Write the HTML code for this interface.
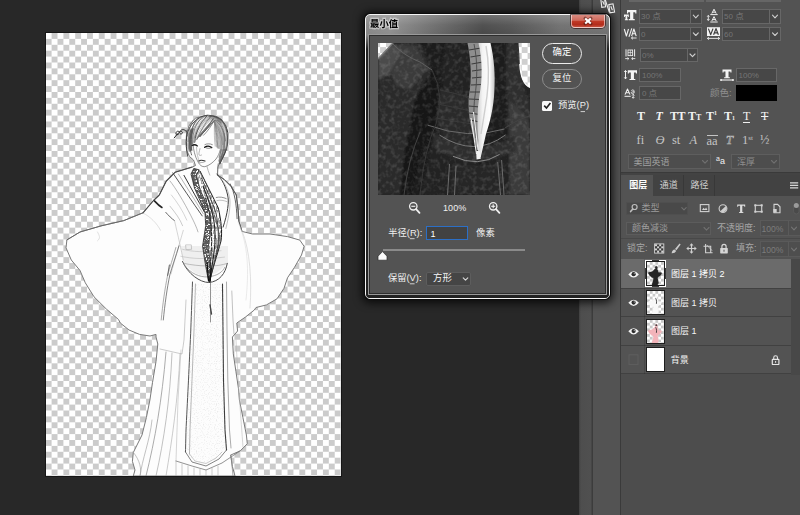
<!DOCTYPE html>
<html><head><meta charset="utf-8"><title>ps</title>
<style>
*{margin:0;padding:0;box-sizing:border-box}
html,body{width:800px;height:515px;overflow:hidden;background:#282828;font-family:"Liberation Sans",sans-serif;}
.a{position:absolute}
#canvas{left:45px;top:32px;width:297px;height:445px;border:1px solid #161616;background:repeating-conic-gradient(#cbcbcb 0 25%,#fff 0 50%) -0.3px 0/11.812px 11.812px}

.p{background:#535353}
.f{position:absolute;background:#474747;border:1px solid #676767}
.fd{position:absolute;top:0;bottom:0;width:1px;background:#676767}
.t{position:absolute;font-size:8px;line-height:10px;color:#757575;white-space:pre}
.ic{position:absolute;color:#f2f2f2;font-family:"Liberation Serif",serif;font-weight:bold;font-size:12px;line-height:12px;white-space:pre}
.ig{position:absolute;color:#c4c4c4;font-family:"Liberation Serif",serif;font-size:12.5px;line-height:12px;white-space:pre}
.row{position:absolute;left:621px;width:170px;height:29px;border-bottom:1px solid #414141}
.th{position:absolute;left:647px;width:17px;height:23px;background:repeating-conic-gradient(#c8c8c8 0 25%,#fff 0 50%) 0 0/5.6px 5.6px;outline:1px solid #1e1e1e}

#dlg{left:364px;top:13px;width:247px;height:287px;border-radius:6px;background:#0c0c0c;box-shadow:0 1px 9px 2px rgba(0,0,0,.75)}
#dlg:before{content:"";position:absolute;left:1px;top:1px;right:1px;bottom:1px;border-radius:5px;border:1px solid #f4f4f4;
 background:linear-gradient(180deg,rgba(255,255,255,.22) 0,rgba(255,255,255,.06) 10px,rgba(255,255,255,0) 21px),linear-gradient(90deg,#858585 0,#8d8d8d 10%,#6a6a6a 28%,#474747 48%,#505050 60%,#6c6c6c 80%,#707070 100%);}
#dlg:after{content:"";position:absolute;left:2px;top:22px;right:2px;bottom:2px;border-radius:0 0 4px 4px;background:linear-gradient(180deg,rgba(34,34,34,0) 0,#222 14px);}
#dlgc{left:368px;top:34px;width:239px;height:261px;background:#535353;border:1px solid #9a9a9a;box-shadow:inset 0 0 0 1px #2e2e2e}
#cls{left:571px;top:14.500px;width:34px;height:13.500px;border-radius:0 0 4px 4px;border:1px solid rgba(255,255,255,.55);border-top:0;background:linear-gradient(180deg,#d98a80 0,#cf6a5c 45%,#c23a27 50%,#b32d1c 80%,#c4503e 100%);box-shadow:0 0 0 1px rgba(40,10,10,.6)}
.tx{font-family:"Liberation Sans","Noto Sans CJK SC",sans-serif;white-space:pre}

</style></head><body>
<div class="a" id="canvas"></div>

<svg class="a" style="left:0;top:0" width="800" height="515" viewBox="0 0 800 515">
<defs><clipPath id="cv"><rect x="45" y="33" width="296" height="443"/></clipPath>
<clipPath id="bc"><polygon points="193.8,168.4 191.0,174.0 194.5,188.0 200.0,200.6 205.0,213.0 205.7,225.7 203.5,240.0 202.6,246.3 205.3,263.8 207.9,277.8 208.8,281.0 209.8,281.0 211.4,272.5 216.6,255.0 221.0,240.0 222.5,232.0 221.0,220.0 218.3,207.6 212.7,196.4 206.4,183.8 200.0,171.0"/></clipPath>
<pattern id="bp" width="3" height="2.2" patternUnits="userSpaceOnUse" patternTransform="rotate(22)"><rect width="3" height="2.2" fill="#222"/><rect x=".3" y=".4" width="1.100" height=".9" fill="#e8e8e8"/><rect x="1.900" y="1.300" width=".8" height=".7" fill="#bbb"/></pattern>
<filter id="stip" x="0" y="0" width="1" height="1"><feTurbulence type="fractalNoise" baseFrequency="0.85" numOctaves="2" seed="3" result="n"/><feColorMatrix in="n" type="matrix" values="0 0 0 0 0.66  0 0 0 0 0.66  0 0 0 0 0.66  0 0 0 1.5 -0.78" result="m"/><feComposite in="m" in2="SourceGraphic" operator="in"/></filter>
<filter id="brd" x="0" y="0" width="1" height="1"><feTurbulence type="turbulence" baseFrequency="0.55 0.4" numOctaves="2" seed="11" result="n"/><feColorMatrix in="n" type="matrix" values="0 0 0 0 0.1  0 0 0 0 0.1  0 0 0 0 0.1  0 0 0 9 -0.9" result="m"/><feComposite in="m" in2="SourceGraphic" operator="in"/></filter>
<filter id="brd2" x="0" y="0" width="1" height="1"><feTurbulence type="turbulence" baseFrequency="0.5 0.2" numOctaves="2" seed="4" result="n"/><feColorMatrix in="n" type="matrix" values="0 0 0 0 0.1  0 0 0 0 0.1  0 0 0 0 0.1  0 0 0 7 -1.1" result="m"/><feComposite in="m" in2="SourceGraphic" operator="in"/></filter>
<filter id="fb"><feGaussianBlur stdDeviation=".35"/></filter>
</defs>
<g clip-path="url(#cv)">
<polygon points="200.0,116.8 208.3,115.2 216.0,116.3 221.5,119.5 225.8,125.5 228.0,133.3 227.8,143.0 225.5,151.0 223.1,156.3 220.0,161.4 218.0,167.0 217.4,175.1 224.0,179.3 231.0,186.3 236.3,195.0 238.0,209.0 238.9,221.3 242.0,231.4 252.5,234.0 270.0,234.0 287.5,236.6 299.8,240.1 304.1,246.3 301.5,255.0 294.5,267.3 287.5,277.8 284.0,288.3 277.0,298.8 266.5,304.9 256.0,307.5 254.3,310.0 245.5,317.0 236.8,323.0 237.6,331.0 232.4,337.0 233.3,353.8 235.9,371.3 238.5,388.8 239.4,400.0 242.9,417.5 246.4,435.0 247.3,443.8 240.3,450.8 230.6,455.1 232.4,466.5 235.0,476.0 133.3,476.0 135.0,470.0 132.4,461.3 133.3,452.5 142.0,435.0 146.4,417.5 149.9,400.0 152.5,382.5 156.0,361.5 157.8,344.0 156.0,337.0 156.0,334.4 150.0,336.0 139.5,334.4 129.0,330.0 120.3,323.0 118.5,319.5 106.3,309.0 94.0,296.8 85.3,282.8 80.0,270.5 71.3,260.0 66.0,247.8 66.9,239.9 80.0,232.0 101.0,225.9 123.8,220.6 143.0,212.8 153.5,200.5 159.3,195.0 166.3,181.0 175.0,172.3 191.6,167.4 195.5,165.5 193.5,160.0 189.5,156.5 186.6,150.0 186.0,143.0 186.5,134.0 188.8,126.2 192.0,121.5 195.5,118.3" fill="#fdfdfd" stroke="#7a7a7a" stroke-width="1" stroke-linejoin="round"/>
<polygon points="194,284 223,284 225,430 226.500,450 219,459 206,465 193,461 186.500,452 189,380" fill="#9a9a9a" filter="url(#stip)"/>
<path d="M180 246 L228 246 L228 262 Q206 290 183 262Z" fill="#efefef" filter="url(#fb)"/>
<g fill="none" stroke-linecap="round" stroke-linejoin="round" filter="url(#fb)">
<path d="M 207.0 115.3 C 197.2 116.4 188.8 124.8 186.7 136.0 C 186.0 143.0 186.3 150.0 187.7 156.3" stroke="#333" stroke-width="0.9" /><path d="M 198.6 117.8 C 192.3 124.1 189.5 134.6 189.9 146.5 C 190.2 150.0 190.9 152.8 191.6 154.9" stroke="#444" stroke-width="0.8" /><path d="M 202.8 116.7 C 195.1 123.4 192.7 132.5 192.4 143.7" stroke="#555" stroke-width="0.7" /><path d="M 207.0 116.1 C 200.0 122.7 196.0 131.1 194.7 142.3" stroke="#333" stroke-width="0.9" /><path d="M 210.5 116.7 C 204.9 123.4 200.7 130.4 196.9 139.5" stroke="#555" stroke-width="0.7" /><path d="M 213.3 118.5 C 209.1 124.8 204.9 131.1 200.0 136.7" stroke="#333" stroke-width="0.9" /><path d="M 214.2 120.6 C 211.2 126.2 207.7 131.1 203.5 135.3" stroke="#666" stroke-width="0.7" /><path d="M 214.2 120.3 C 220.2 122.7 224.4 130.4 225.4 140.9" stroke="#444" stroke-width="0.8" /><path d="M 213.3 121.7 C 218.1 126.9 221.2 134.6 222.6 144.6" stroke="#666" stroke-width="0.7" /><path d="M 209.8 115.8 C 218.1 115.7 225.8 122.0 227.5 131.8" stroke="#333" stroke-width="0.9" /><path d="M 220.9 119.2 C 226.8 126.2 229.1 136.7 226.5 148.6 C 225.1 154.2 221.2 159.5 219.8 163.9" stroke="#333" stroke-width="0.9" /><path d="M 224.0 133.2 C 225.4 141.6 224.0 150.0 221.2 157.0" stroke="#555" stroke-width="0.7" /><path d="M 221.2 136.0 C 222.6 144.4 221.2 151.6 219.0 157.2" stroke="#777" stroke-width="0.7" /><path d="M 217.0 124.8 C 220.9 130.4 223.5 138.1 223.7 147.2" stroke="#777" stroke-width="0.6" /><path d="M 215.3 117.8 C 220.9 119.2 225.1 124.1 226.5 129.0" stroke="#666" stroke-width="0.7" /><path d="M 193.0 120.6 C 189.5 126.2 188.1 133.2 188.1 141.6" stroke="#666" stroke-width="0.7" /><path d="M 196.5 119.2 C 192.3 125.5 190.9 132.5 191.3 140.9" stroke="#777" stroke-width="0.6" /><path d="M 204.9 118.5 C 199.3 124.1 196.0 130.4 194.1 138.1" stroke="#777" stroke-width="0.6" /><path d="M 211.9 121.3 C 207.0 126.9 202.8 131.8 198.6 136.0" stroke="#666" stroke-width="0.9" /><path d="M 211.2 123.4 C 207.0 128.3 202.8 132.9 197.9 137.1" stroke="#555" stroke-width="1.0" /><path d="M 190.2 130.4 C 188.8 136.0 188.5 143.0 189.1 150.0" stroke="#777" stroke-width="0.8" /><path d="M 192.3 129.0 C 190.9 136.0 190.7 143.0 191.6 150.0" stroke="#888" stroke-width="0.7" /><path d="M 207.1 115.1 C 195.9 118.3 188.2 129.0 187.1 149.4" stroke="#666" stroke-width="0.4257841701067515" /><path d="M 207.8 115.7 C 197.0 118.9 189.9 129.8 188.9 148.3" stroke="#666" stroke-width="0.5731308845852496" /><path d="M 208.5 117.0 C 197.9 120.4 191.2 129.1 189.5 146.9" stroke="#888" stroke-width="0.43091671373307744" /><path d="M 209.2 116.5 C 199.3 121.0 193.0 129.8 191.0 145.9" stroke="#999" stroke-width="0.5396805597519022" /><path d="M 210.3 117.2 C 200.7 121.0 194.8 129.4 191.9 144.6" stroke="#999" stroke-width="0.6188335868317653" /><path d="M 210.2 118.3 C 201.8 121.8 196.5 129.7 193.1 143.0" stroke="#666" stroke-width="0.6293712598638439" /><path d="M 211.2 118.6 C 203.3 122.8 197.9 130.4 194.2 142.7" stroke="#999" stroke-width="0.5422295012258933" /><path d="M 211.9 118.2 C 205.1 123.4 199.8 130.8 195.2 141.0" stroke="#999" stroke-width="0.4067688784166766" /><path d="M 212.3 118.8 C 205.8 123.4 201.2 130.2 196.2 139.9" stroke="#777" stroke-width="0.4241743903600416" /><path d="M 213.0 119.6 C 207.9 124.9 202.9 130.5 197.4 138.6" stroke="#777" stroke-width="0.6873193611891973" /><path d="M 213.3 119.7 C 208.5 124.9 204.0 131.1 198.4 137.1" stroke="#777" stroke-width="0.5603772886900311" /><path d="M 214.7 120.3 C 217.4 128.0 220.7 136.3 221.1 150.0" stroke="#aaa" stroke-width="0.5177136720673806" /><path d="M 214.8 120.0 C 218.7 126.9 220.4 135.8 220.8 149.8" stroke="#666" stroke-width="0.43071387931756666" /><path d="M 215.5 120.3 C 219.7 127.4 220.9 135.8 221.5 150.1" stroke="#999" stroke-width="0.5806837566886025" /><path d="M 215.9 119.7 C 219.8 127.7 222.1 136.1 221.6 150.2" stroke="#999" stroke-width="0.5435865830529973" /><path d="M 216.6 120.0 C 220.2 127.6 222.6 136.7 222.9 150.2" stroke="#999" stroke-width="0.6935503728156918" /><path d="M 217.3 120.2 C 221.1 126.9 223.0 136.8 222.8 150.2" stroke="#999" stroke-width="0.5909325776019133" /><path d="M 217.4 120.2 C 222.3 126.6 223.9 136.5 223.5 149.7" stroke="#777" stroke-width="0.5066687630064874" /><path d="M 217.3 119.2 C 222.5 126.6 225.0 137.2 223.5 150.4" stroke="#999" stroke-width="0.6865001893963999" /><path d="M 218.1 119.2 C 223.0 126.5 225.1 137.0 224.3 150.4" stroke="#777" stroke-width="0.6727597593955204" /><path d="M 218.6 119.6 C 224.4 126.2 226.0 137.1 223.9 150.4" stroke="#777" stroke-width="0.6367406293060829" /><path d="M 219.1 119.6 C 225.3 126.5 226.7 137.5 224.9 149.5" stroke="#888" stroke-width="0.40826465521264976" /><path d="M 219.8 119.2 C 225.7 126.6 227.5 137.1 225.6 149.5" stroke="#aaa" stroke-width="0.43929515560283516" /><path d="M 219.7 119.6 C 226.4 126.3 228.5 137.1 225.8 150.4" stroke="#888" stroke-width="0.408398117687929" /><path d="M 220.4 118.9 C 227.2 126.0 228.8 137.7 225.3 150.2" stroke="#777" stroke-width="0.5987424490973698" /><path d="M 214.5 120.9 C 214.5 127.9 213.8 135.7 215.2 146.2" stroke="#999" stroke-width="0.5825663916854541" /><path d="M 214.7 120.4 C 214.5 127.7 214.8 135.6 216.3 146.5" stroke="#aaa" stroke-width="0.6352817426096427" /><path d="M 214.1 120.9 C 215.1 127.4 216.2 136.0 217.0 147.3" stroke="#777" stroke-width="0.5329745180732317" /><path d="M 214.7 120.7 C 215.9 127.7 216.9 136.0 217.9 148.1" stroke="#666" stroke-width="0.662960644534178" /><path d="M 214.9 120.4 C 216.5 128.0 218.1 135.7 218.4 148.3" stroke="#777" stroke-width="0.6013466341211767" /><path d="M 214.7 120.4 C 216.9 127.3 219.0 136.4 219.7 148.8" stroke="#888" stroke-width="0.6648498500971226" /><path d="M 215.2 120.3 C 218.0 127.4 219.7 136.4 220.8 149.4" stroke="#aaa" stroke-width="0.6982217837473863" /><path d="M 207.5 115.7 C 212.8 115.0 218.1 116.4 221.5 119.9" stroke="#555" stroke-width="0.6325991556567963" /><path d="M 208.8 116.7 C 213.4 116.4 218.4 117.7 221.2 120.3" stroke="#444" stroke-width="0.8623594754308386" /><path d="M 209.8 117.8 C 214.5 117.4 218.6 118.5 221.4 121.1" stroke="#777" stroke-width="0.7282379701573015" /><path d="M 211.3 118.3 C 214.8 118.2 218.6 118.9 221.5 121.8" stroke="#888" stroke-width="0.5334970104938073" /><path d="M 212.6 119.2 C 215.9 119.0 218.6 120.0 221.4 122.3" stroke="#666" stroke-width="0.5172822759357543" /><path d="M 213.8 120.6 C 216.6 120.0 218.6 121.1 221.1 123.1" stroke="#666" stroke-width="0.6159843338897433" /><path d="M 221.1 149.7 C 220.5 153.7 219.5 156.7 219.0 160.7" stroke="#666" stroke-width="0.7056939645849485" /><path d="M 221.5 149.8 C 221.4 154.3 220.2 157.4 219.3 161.4" stroke="#888" stroke-width="0.7750966942762766" /><path d="M 222.8 149.5 C 222.2 154.3 220.5 157.5 219.0 161.1" stroke="#666" stroke-width="0.5057020517311179" /><path d="M 223.2 150.0 C 222.3 153.7 220.9 157.8 219.3 162.3" stroke="#777" stroke-width="0.5968851735969947" /><path d="M 223.6 149.5 C 222.8 154.2 220.9 158.5 219.7 162.3" stroke="#666" stroke-width="0.5137786894013487" /><path d="M 224.9 149.3 C 223.3 154.0 221.1 158.2 219.5 162.4" stroke="#444" stroke-width="0.5363406785254737" /><path d="M 225.4 149.1 C 224.3 154.0 221.6 158.8 219.3 163.4" stroke="#666" stroke-width="0.7630174693250691" /><path d="M 226.1 149.7 C 224.7 154.0 222.6 158.6 220.0 163.5" stroke="#444" stroke-width="0.8299428547480391" /><path d="M 213.4 121.4 C 209.1 126.5 204.9 131.4 199.7 136.3" stroke="#555" stroke-width="0.747922736450594" /><path d="M 212.4 122.7 C 208.4 127.4 203.7 131.8 198.6 136.7" stroke="#555" stroke-width="0.6129854794647274" /><path d="M 211.6 123.2 C 207.1 128.3 202.8 132.9 197.9 137.1" stroke="#777" stroke-width="0.7693572741788621" /><path d="M 190.9 129.0 C 189.5 136.0 188.9 143.1 189.2 151.4" stroke="#555" stroke-width="0.7959314365682968" /><path d="M 192.0 129.0 C 189.9 136.0 189.5 143.1 190.2 151.1" stroke="#555" stroke-width="0.7398821090085062" /><path d="M 192.1 129.1 C 190.6 136.0 189.9 143.0 190.7 150.9" stroke="#555" stroke-width="0.7768740690281792" /><path d="M 193.0 128.8 C 191.0 136.0 190.6 142.7 191.6 150.2" stroke="#555" stroke-width="0.8745017363814866" /><path d="M 193.1 129.0 C 191.7 136.3 191.3 142.8 191.9 150.4" stroke="#555" stroke-width="0.5298451470776568" /><path d="M 193.0 144.1 C 193.5 150.0 194.7 155.6 197.9 161.8 C 199.7 165.3 202.1 167.0 204.9 166.7 C 209.1 165.6 213.3 162.3 216.0 159.0 C 218.1 156.3 219.5 152.8 220.2 150.0" stroke="#666" stroke-width="0.7" /><path d="M 204.7 147.3 C 206.7 145.9 209.5 145.9 211.7 147.6" stroke="#111" stroke-width="1.4" /><path d="M 205.8 147.7 C 207.7 148.6 209.8 148.6 211.2 147.7" stroke="#555" stroke-width="0.7" /><path d="M 192.1 145.5 C 193.7 144.4 195.5 144.5 197.4 145.9" stroke="#1a1a1a" stroke-width="1.3" /><path d="M 204.9 144.6 C 207.0 143.5 209.8 143.5 212.3 144.6" stroke="#666" stroke-width="0.7" /><path d="M 200.0 148.6 C 199.4 151.4 198.6 153.5 199.0 154.9 C 199.7 155.6 200.8 155.6 201.6 155.0" stroke="#888" stroke-width="0.6" /><path d="M 198.6 160.9 C 200.2 160.0 202.5 160.0 205.0 161.1" stroke="#333" stroke-width="1.1" /><path d="M 199.4 162.0 C 201.1 162.8 203.0 162.8 204.4 162.0" stroke="#888" stroke-width="0.6" /><path d="M 196.5 147.2 C 196.5 152.8 197.9 158.3 200.0 163.2" stroke="#999" stroke-width="0.6" /><path d="M 207.0 166.5 C 207.7 169.5 208.6 172.3 209.8 175.1" stroke="#888" stroke-width="0.6" /><path d="M 218.1 163.9 C 217.3 168.1 217.3 171.6 217.9 175.1" stroke="#777" stroke-width="0.7" /><path d="M 186.3 131.5 C 184.6 129.0 181.8 129.0 180.1 131.1 C 178.7 133.2 180.7 134.9 182.1 133.5 C 183.2 132.1 181.5 130.7 179.5 132.1 C 177.3 133.7 175.9 136.0 174.2 137.9 M 179.5 132.1 C 178.4 130.4 176.2 131.1 175.9 133.2 C 175.9 134.9 177.9 135.3 178.7 134.0" stroke="#2a2a2a" stroke-width="1.0" /><path d="M 186.3 130.4 L 187.4 136.0" stroke="#555" stroke-width="0.8" /><path d="M 184.0 175.4 C 191.0 188.0 198.0 200.6 204.3 211.7" stroke="#333" stroke-width="1.0" /><path d="M 172.8 172.9 C 181.2 185.2 192.4 202.0 202.2 215.9" stroke="#444" stroke-width="0.9" /><path d="M 178.4 174.0 C 185.4 185.2 195.2 200.6 203.3 213.8" stroke="#888" stroke-width="0.6" /><path d="M 170.0 181.0 C 175.6 188.0 184.0 202.0 191.0 215.9 C 193.8 221.5 196.6 227.1 198.0 231.9" stroke="#888" stroke-width="0.6" /><path d="M 216.9 174.0 C 222.4 179.6 225.7 186.6 227.6 195.0 C 229.4 202.0 227.6 213.1 223.1 227.1" stroke="#3a3a3a" stroke-width="1.0" /><path d="M 219.2 176.5 C 224.8 182.4 227.6 189.4 229.4 196.6 C 231.0 203.4 229.4 214.5 225.9 228.5" stroke="#999" stroke-width="0.6" /><path d="M 216.2 197.5 C 219.7 196.6 223.1 197.2 226.2 198.6" stroke="#666" stroke-width="0.7" /><path d="M 216.9 200.6 C 220.3 199.7 223.8 200.3 227.1 201.7" stroke="#999" stroke-width="0.6" /><path d="M 230.1 183.8 C 234.6 192.2 236.6 204.8 237.1 218.7" stroke="#555" stroke-width="0.9" /><path d="M 170.0 206.2 C 175.6 213.1 179.8 218.7 182.6 225.7" stroke="#aaa" stroke-width="0.6" /><path d="M 171.4 195.0 C 177.0 202.0 182.6 210.3 186.8 220.1" stroke="#bbb" stroke-width="0.6" /><path d="M 154.4 200.9 C 157.0 203.7 159.6 206.1 161.9 207.5" stroke="#222" stroke-width="1.6" /><path d="M 165.8 212.4 C 168.4 215.4 171.9 218.9 174.5 220.6" stroke="#555" stroke-width="0.9" /><path d="M 143.0 213.1 C 150.0 216.3 157.0 223.3 160.5 230.3" stroke="#ccc" stroke-width="0.6" /><path d="M 97.5 232.0 C 99.3 235.5 101.0 238.1 97.5 240.8" stroke="#ccc" stroke-width="0.6" /><path d="M 174.5 220.6 C 178.0 235.5 181.5 251.3 183.3 260.0" stroke="#bbb" stroke-width="0.6" /><path d="M 183.3 230.3 C 179.8 242.5 174.5 260.0 171.0 274.0" stroke="#bbb" stroke-width="0.6" /><path d="M192 167 L175 172.300 L166.300 181 L159.300 195 L153.500 200.500 L143 212.800" stroke="#4a4a4a" stroke-width="1.1" /><path d="M217.400 175 L224 179.300 L231 186.300 L236.300 195 L238 209 L238.900 221.300 L242 231.400" stroke="#555" stroke-width="1.0" /><path d="M143 212.800 L123.800 220.600 L101 225.900 L80 232 L66.900 239.900" stroke="#666" stroke-width="0.9" /><path d="M 182.5 261.5 C 187.8 273.8 200.0 282.5 208.8 282.5 C 219.3 281.6 225.4 273.8 227.3 263.3" stroke="#4a4a4a" stroke-width="1.0" /><path d="M 184.6 265.0 C 190.4 273.8 200.0 277.3 207.9 276.9 C 217.5 275.9 222.8 272.0 224.9 267.1" stroke="#888" stroke-width="0.7" /><path d="M 183.4 263.3 C 191.3 265.0 200.0 265.9 205.3 265.9" stroke="#999" stroke-width="0.6" /><path d="M 212.3 265.9 C 217.5 265.9 222.8 264.7 226.6 263.6" stroke="#999" stroke-width="0.6" /><path d="M 179.0 245.8 C 175.9 256.3 172.0 266.8 169.9 274.6 C 167.1 287.8 164.7 305.3 163.3 320.0" stroke="#666" stroke-width="0.8" /><path d="M 175.9 247.5 C 173.1 258.0 169.6 267.6 167.5 275.9 C 165.0 287.8 162.6 305.3 161.2 320.0" stroke="#888" stroke-width="0.7" /><path d="M 169.4 265.0 L 167.6 275.5" stroke="#666" stroke-width="1.0" /><path d="M 186.0 244.9 L 191.3 244.9 L 191.6 249.3 L 186.4 249.6 Z" stroke="#aaa" stroke-width="0.6" /><path d="M 182.5 249.3 C 193.0 251.9 203.5 252.4 221.0 250.7" stroke="#bbb" stroke-width="0.6" /><path d="M 180.8 256.3 C 193.0 258.9 205.3 259.4 224.5 257.1" stroke="#bbb" stroke-width="0.6" /><path d="M192.5 282 L190.8 330 L188.5 380 L186 430 L185.5 452" stroke="#555" stroke-width="1.0" stroke-dasharray="5 0.8"/><path d="M195.5 284 L194 330 L192 380 L190 430 L189.5 454" stroke="#999" stroke-width="0.7" /><path d="M222.5 284 L223 330 L223.5 380 L225 430 L226.5 450" stroke="#3c3c3c" stroke-width="1.1" stroke-dasharray="4 0.7"/><path d="M226.5 282 L227 330 L227.8 380 L229.5 430 L231 448" stroke="#888" stroke-width="0.7" /><path d="M210.5 281 L210.5 322" stroke="#666" stroke-width="0.7" /><path d="M210 305 L211.5 314" stroke="#444" stroke-width="1.4" /><path d="M185.5 452 L192 462 L206 466 L219 459 L226.5 450" stroke="#666" stroke-width="0.8" /><path d="M189.5 454 L195 461 L206 463.5 L216 458 L222 452" stroke="#aaa" stroke-width="0.6" /><path d="M176 461 L192 466 L206 470 L222 463 L240 451" stroke="#777" stroke-width="0.8" /><path d="M176 461 L176 476 M182 464 L182 476 M188 466 L188 476 M194 468 L194 476 M200 469 L200 476 M206 470 L206 476 M212 468 L212 476 M218 466 L218 476" stroke="#aaa" stroke-width="0.6" /><path d="M176 461 L178 400 L181 350" stroke="#bbb" stroke-width="0.6" /><path d="M160 349 L182 354 L184 340 L186 300" stroke="#aaa" stroke-width="0.6" /><path d="M166 352 C162 400 155 440 146 476" stroke="#888" stroke-width="0.7" /><path d="M172 353 C170 400 164 440 156 476" stroke="#999" stroke-width="0.6" /><path d="M180 354 C178 400 172 440 166 476" stroke="#aaa" stroke-width="0.6" /><path d="M152 420 C150 440 142 460 140 476" stroke="#999" stroke-width="0.6" /><path d="M133 452 C140 460 142 470 140 476" stroke="#999" stroke-width="0.6" /><path d="M231.800 291 L233 320 L234 334" stroke="#999" stroke-width="0.6" /><path d="M236 340 C238 380 241 420 243 447" stroke="#bbb" stroke-width="0.6" /><path d="M231 455 L233 476" stroke="#888" stroke-width="0.7" /><path d="M242 231 C250 250 252 280 250 308" stroke="#ccc" stroke-width="0.6" /><path d="M238 222 C246 240 250 262 246 300" stroke="#ddd" stroke-width="0.6" />
</g>
<g filter="url(#fb)">
<polygon points="193.8,168.4 191.0,174.0 194.5,188.0 200.0,200.6 205.0,213.0 205.7,225.7 203.5,240.0 202.6,246.3 205.3,263.8 207.9,277.8 208.8,281.0 209.8,282.5 209.5,279.3 210.8,265.3 208.1,247.8 209.0,241.5 211.2,227.2 210.5,214.5 205.5,202.1 200.0,189.5 196.5,175.5 199.3,169.9" fill="#fafafa"/><polygon points="193.8,168.4 191.0,174.0 194.5,188.0 200.0,200.6 205.0,213.0 205.7,225.7 203.5,240.0 202.6,246.3 205.3,263.8 207.9,277.8 208.8,281.0 209.8,282.5 209.5,279.3 210.8,265.3 208.1,247.8 209.0,241.5 211.2,227.2 210.5,214.5 205.5,202.1 200.0,189.5 196.5,175.5 199.3,169.9" fill="#000" filter="url(#brd)"/>
<polygon points="193.8,168.4 191.0,174.0 194.5,188.0 200.0,200.6 205.0,213.0 205.7,225.7 203.5,240.0 202.6,246.3 205.3,263.8 207.9,277.8 208.8,281.0 209.8,282.5 209.5,279.3 210.8,265.3 208.1,247.8 209.0,241.5 211.2,227.2 210.5,214.5 205.5,202.1 200.0,189.5 196.5,175.5 199.3,169.9" fill="none" stroke="#222" stroke-width=".8"/>
<polygon points="193.8,168.4 191.0,174.0 194.5,188.0 200.0,200.6 205.0,213.0 205.7,225.7 203.5,240.0 202.6,246.3 205.3,263.8 207.9,277.8 208.8,281.0 209.8,281.0 211.4,272.5 216.6,255.0 221.0,240.0 222.5,232.0 221.0,220.0 218.3,207.6 212.7,196.4 206.4,183.8 200.0,171.0" fill="#000" filter="url(#brd2)" opacity=".55"/>
<g fill="none" stroke="#1e1e1e" stroke-width="1">
<path d="M200 171 C206.400 184 213 197 218.300 208 C221 220 222.500 232 221 241 C217 256 212 270 209.800 281"/>
<path d="M201.500 178 C207 191 212.500 202 216 213 C218.500 226 219 238 217.500 248 C215 260 212 272 210 280" stroke="#333" stroke-width=".9"/>
<path d="M203 186 C207.500 197 211 207 213.500 218 C215.500 230 215.500 242 214 252 C213 262 211 272 209.500 280" stroke="#222" stroke-width="1.100"/>
<path d="M205.500 198 C208.500 208 210.500 218 211.300 228 C212 240 211.500 254 210 268" stroke="#2a2a2a" stroke-width="1" stroke-dasharray="4 1"/>
<path d="M210 203 C214 214 217.500 224 219.500 236 C219.500 244 218 250 216 256" stroke="#444" stroke-width=".8"/>
<path d="M207 262 L208.500 281 L210.300 281 L211 268" stroke="#111" stroke-width="1.200"/>
</g>
</g>
</g>
</svg>

<!-- strips -->
<div class="a" style="left:579px;top:0;width:14px;height:515px;background:linear-gradient(90deg,#404040 0,#4e4e4e 2px,#505050 12px,#3c3c3c 13px)"></div>
<div class="a" style="left:593px;top:0;width:27px;height:515px;background:#535353"></div>
<div class="a" style="left:620px;top:0;width:1px;height:515px;background:#3a3a3a"></div>
<!-- character panel -->
<div class="a p" style="left:621px;top:0;width:179px;height:172px"></div>
<div class="a" style="left:621px;top:172px;width:179px;height:3px;background:#434343;border-top:1px solid #3a3a3a"></div>
<div class="f" style="left:639px;top:9px;width:63px;height:15px"><div class="fd" style="left:49.500px"></div></div>
<div class="f" style="left:639px;top:27px;width:63px;height:14px"><div class="fd" style="left:49.500px"></div></div>
<div class="f" style="left:640px;top:48px;width:58px;height:14px"><div class="fd" style="left:46px"></div></div>
<div class="f" style="left:722px;top:9px;width:59px;height:15px"><div class="fd" style="left:45.500px"></div></div>
<div class="f" style="left:722px;top:27px;width:59px;height:14px"><div class="fd" style="left:46px"></div></div>
<div class="f" style="left:639px;top:68px;width:42px;height:14px"></div>
<div class="f" style="left:639px;top:86px;width:42px;height:14px"></div>
<div class="f" style="left:736px;top:68px;width:41px;height:14px"></div>
<div class="a" style="left:736px;top:85px;width:41px;height:16px;background:#000"></div>
<div class="f" style="left:628px;top:154px;width:83px;height:15px;border-color:#5e5e5e;background:#4d4d4d"></div>
<div class="f" style="left:731px;top:154px;width:49px;height:15px;border-color:#5e5e5e;background:#4d4d4d"></div>
<div class="t" style="left:641px;top:11.500px">30</div>
<div class="t" style="left:641px;top:29.500px">0</div>
<div class="t" style="left:642px;top:50.500px">0%</div>
<div class="t" style="left:724px;top:11.500px">50</div>
<div class="t" style="left:724px;top:29.500px">60</div>
<div class="t" style="left:642px;top:70.500px">100%</div>
<div class="t" style="left:642px;top:88.500px">0</div>
<div class="t" style="left:738.500px;top:70.500px">100%</div>
<div class="a" style="left:629px;top:0;width:75px;height:1.500px;background:#666"></div><div class="a" style="left:706px;top:0;width:75px;height:1.500px;background:#666"></div>
<!-- char icons -->
<svg class="a" style="left:0;top:0" width="800" height="110" viewBox="0 0 800 110"><polygon points="627.00,10.00 636.40,10.00 636.40,13.47 635.27,13.47 635.27,12.24 633.30,12.24 633.30,18.98 634.71,18.98 634.71,20.20 628.69,20.20 628.69,18.98 630.10,18.98 630.10,12.24 628.13,12.24 628.13,13.47 627.00,13.47" fill="#f4f4f4"/><polygon points="624.00,14.40 628.80,14.40 628.80,16.90 627.90,16.90 627.90,15.90 627.30,15.90 627.30,19.20 627.94,19.20 627.94,20.20 624.86,20.20 624.86,19.20 625.50,19.20 625.50,15.90 624.90,15.90 624.90,16.90 624.00,16.90" fill="#f4f4f4"/><g fill="none" stroke="#f0f0f0" stroke-width="1.100" stroke-linejoin="round"><path d="M624.300 29 l2.100 7 2.100-7"/><path d="M631.800 28.400 l-2.800 8.400"/><path d="M631.600 36.200 l2.300-7.200 2.300 7.200 M632.400 33.800h3"/></g><path d="M631.400 38h5.200M631.400 38l1.500-1.300M631.400 38l1.500 1.300" stroke="#f0f0f0" stroke-width=".9" fill="none"/><g fill="none" stroke="#f0f0f0" stroke-width="1" stroke-linejoin="round"><path d="M711.800 13.600 l2.200-4.400 2.200 4.400 M712.600 12.200h2.800"/><path d="M710.300 14.600h7.400"/><path d="M711.800 21 l2.200-4.400 2.200 4.400 M712.600 19.600h2.800"/><path d="M710.300 22h7.400"/><path d="M708.300 15.500v4.800 M707.200 16.700l1.100-1.300 1.100 1.300 M707.200 19.200l1.100 1.300 1.100-1.300" stroke-width=".9"/></g><rect x="707" y="27.200" width="13" height="8.800" fill="#f2f2f2"/><g fill="none" stroke="#3c3c3c" stroke-width="1.200" stroke-linejoin="round"><path d="M708.400 28.600 l2.300 6 2.300-6"/><path d="M713.600 34.800 l2.400-6.200 2.400 6.200 M714.400 32.800h3.200"/></g><path d="M707.400 38.400h12.200M707.400 38.400l1.500-1.300M707.400 38.400l1.500 1.300M719.600 38.400l-1.500-1.300M719.600 38.400l-1.500 1.300" stroke="#f0f0f0" stroke-width=".9" fill="none"/><g fill="none" stroke="#ededed" stroke-width="1"><path d="M626 49.300v7.200M634.600 49.300v7.200"/><rect x="628" y="50" width="4.600" height="5.600" stroke-width=".9"/><path d="M628 52.600h4.600M630.300 50v5.600" stroke-width=".7"/><path d="M625.200 58.600h3.600M628.800 58.600l-1.300-1.200M628.800 58.600l-1.300 1.200M635.300 58.600h-3.600M631.700 58.600l1.300-1.200M631.700 58.600l1.300 1.200" stroke-width=".9"/></g><path d="M625.500 70.600v8.200M624.300 72l1.200-1.500 1.200 1.500M624.300 77.400l1.200 1.500 1.200-1.500" stroke="#f0f0f0" stroke-width="1" fill="none"/><polygon points="627.80,70.20 637.00,70.20 637.00,73.57 635.90,73.57 635.90,72.38 633.96,72.38 633.96,78.91 635.34,78.91 635.34,80.10 629.46,80.10 629.46,78.91 630.84,78.91 630.84,72.38 628.90,72.38 628.90,73.57 627.80,73.57" fill="#f4f4f4"/><polygon points="722.50,69.60 731.50,69.60 731.50,72.52 730.42,72.52 730.42,71.49 728.53,71.49 728.53,77.17 729.88,77.17 729.88,78.20 724.12,78.20 724.12,77.17 725.47,77.17 725.47,71.49 723.58,71.49 723.58,72.52 722.50,72.52" fill="#f4f4f4"/><path d="M721 80h12" stroke="#f0f0f0" stroke-width="1.100"/><circle cx="721" cy="80" r="1" fill="#f0f0f0"/><circle cx="733" cy="80" r="1" fill="#f0f0f0"/><g fill="none" stroke="#f0f0f0" stroke-width="1.050" stroke-linejoin="round"><path d="M625 94.600 l2.500-5.600 2.500 5.600 M626 92.800h3"/><path d="M624.500 96.300h6.200"/><path d="M631.300 90.600c.8-1 2.800-.9 2.800.4v2.200 M634.100 91.800c-1.600 0-2.900.2-2.900 1 0 1 2.100 1 2.900-.2" stroke-width=".85"/><path d="M633.200 94.300v3.800M632 95.500l1.200-1.300 1.200 1.300M632 97l1.200 1.300 1.200-1.300" stroke-width=".85"/></g></svg>
<div class="ic" style="left:637px;top:110px">T</div>
<div class="ic" style="left:655.500px;top:110px;font-style:italic">T</div>
<div class="ic" style="left:670px;top:110px;letter-spacing:-.5px">TT</div>
<div class="ic" style="left:688px;top:110px">T<span style="font-size:8px">T</span></div>
<div class="ic" style="left:706px;top:110px">T<span style="font-size:6px;vertical-align:top;line-height:6px">1</span></div>
<div class="ic" style="left:724px;top:110px">T<span style="font-size:6px">1</span></div>
<div class="ic" style="left:743px;top:110px;font-weight:normal;border-bottom:1px solid #f0f0f0;height:12.500px">T</div>
<div class="ic" style="left:761px;top:110px;font-weight:normal;text-decoration:line-through">T</div>
<div class="ig" style="left:636.500px;top:133.500px">fi</div>
<div class="ig" style="left:655.500px;top:133.500px;font-style:italic">&#1012;</div>
<div class="ig" style="left:672px;top:133.500px">st</div>
<div class="ig" style="left:689.500px;top:133.500px;font-style:italic">A</div>
<div class="ig" style="left:706.500px;top:133.500px;border-top:1px solid #c4c4c4;line-height:11px;top:135px">aa</div>
<div class="ig" style="left:726px;top:133.500px;font-style:italic;color:transparent;-webkit-text-stroke:.6px #c4c4c4">T</div>
<div class="ig" style="left:742px;top:133.500px">1<span style="font-size:7px;vertical-align:top;line-height:8px">st</span></div>
<div class="ig" style="left:760px;top:133.500px">&#189;</div>
<div class="ic" style="left:716px;top:154.500px;font-family:'Liberation Sans',sans-serif;font-weight:normal;font-size:7px"><span style="vertical-align:top;line-height:8px">a</span><span style="font-size:9px">a</span></div>
<!-- layers panel -->
<div class="a" style="left:621px;top:175px;width:179px;height:21px;background:#424242"></div>
<div class="a p" style="left:621px;top:175px;width:32px;height:21px"></div>
<div class="a" style="left:683px;top:175px;width:1px;height:21px;background:#383838"></div>
<div class="a" style="left:714px;top:175px;width:1px;height:21px;background:#383838"></div>
<div class="a p" style="left:621px;top:196px;width:179px;height:63px"></div>
<div class="a" style="left:621px;top:238px;width:179px;height:1px;background:#484848"></div>
<div class="f" style="left:626px;top:202px;width:62px;height:13px;border-color:#4f4f4f;background:#494949"></div>
<div class="f" style="left:626px;top:222px;width:85px;height:13px;border-color:#5c5c5c;background:#4e4e4e"></div>
<div class="f" style="left:760px;top:220px;width:40px;height:16px;border-color:#5a5a5a;background:#4e4e4e;border-right:0"><div class="fd" style="left:27px;background:#5a5a5a"></div></div>
<div class="f" style="left:760px;top:241px;width:40px;height:16px;border-color:#5a5a5a;background:#4e4e4e;border-right:0"><div class="fd" style="left:27px;background:#5a5a5a"></div></div>
<div class="t" style="left:761.500px;top:223.500px;color:#7c7c7c;font-size:8.600px">100%</div>
<div class="t" style="left:761.500px;top:244.500px;color:#7c7c7c;font-size:8.600px">100%</div>
<!-- layer rows -->
<div class="a" style="left:621px;top:259px;width:179px;height:256px;background:#4d4d4d"></div>
<div class="a" style="left:791px;top:259px;width:9px;height:116px;background:#484848"></div>
<div class="row" style="top:259px;height:29.500px;background:#6b6b6b"></div>
<div class="row p" style="top:288.500px;height:28.500px"></div>
<div class="row p" style="top:317px;height:28.500px"></div>
<div class="row p" style="top:345.500px;height:28.500px"></div>
<div class="a" style="left:644px;top:259px;width:1px;height:115px;background:rgba(0,0,0,.12)"></div>
<div class="a" style="left:645px;top:260px;width:21px;height:27px;border:1px solid #fff;background:#222"></div>
<div class="a" style="left:652px;top:260px;width:7px;height:1px;background:#3a3a3a"></div><div class="a" style="left:652px;top:286px;width:7px;height:1px;background:#3a3a3a"></div><div class="a" style="left:645px;top:268px;width:1px;height:11px;background:#3a3a3a"></div><div class="a" style="left:665px;top:268px;width:1px;height:11px;background:#3a3a3a"></div>
<div class="th" style="top:262px"><svg style="position:absolute;left:0;top:0" width="17" height="23" viewBox="45.7 33 295.3 443" preserveAspectRatio="none"><polygon points="200.0,116.8 208.3,115.2 216.0,116.3 221.5,119.5 225.8,125.5 228.0,133.3 227.8,143.0 225.5,151.0 223.1,156.3 220.0,161.4 218.0,167.0 217.4,175.1 224.0,179.3 231.0,186.3 236.3,195.0 238.0,209.0 238.9,221.3 242.0,231.4 252.5,234.0 270.0,234.0 287.5,236.6 299.8,240.1 304.1,246.3 301.5,255.0 294.5,267.3 287.5,277.8 284.0,288.3 277.0,298.8 266.5,304.9 256.0,307.5 254.3,310.0 245.5,317.0 236.8,323.0 237.6,331.0 232.4,337.0 233.3,353.8 235.9,371.3 238.5,388.8 239.4,400.0 242.9,417.5 246.4,435.0 247.3,443.8 240.3,450.8 230.6,455.1 232.4,466.5 235.0,476.0 133.3,476.0 135.0,470.0 132.4,461.3 133.3,452.5 142.0,435.0 146.4,417.5 149.9,400.0 152.5,382.5 156.0,361.5 157.8,344.0 156.0,337.0 156.0,334.4 150.0,336.0 139.5,334.4 129.0,330.0 120.3,323.0 118.5,319.5 106.3,309.0 94.0,296.8 85.3,282.8 80.0,270.5 71.3,260.0 66.0,247.8 66.9,239.9 80.0,232.0 101.0,225.9 123.8,220.6 143.0,212.8 153.5,200.5 159.3,195.0 166.3,181.0 175.0,172.3 191.6,167.4 195.5,165.5 193.5,160.0 189.5,156.5 186.6,150.0 186.0,143.0 186.5,134.0 188.8,126.2 192.0,121.5 195.5,118.3" fill="#262626" stroke="#262626" stroke-width="5"/></svg></div>
<div class="th" style="top:291px"><svg style="position:absolute;left:0;top:0" width="17" height="23" viewBox="45.7 33 295.3 443" preserveAspectRatio="none"><polygon points="200.0,116.8 208.3,115.2 216.0,116.3 221.5,119.5 225.8,125.5 228.0,133.3 227.8,143.0 225.5,151.0 223.1,156.3 220.0,161.4 218.0,167.0 217.4,175.1 224.0,179.3 231.0,186.3 236.3,195.0 238.0,209.0 238.9,221.3 242.0,231.4 252.5,234.0 270.0,234.0 287.5,236.6 299.8,240.1 304.1,246.3 301.5,255.0 294.5,267.3 287.5,277.8 284.0,288.3 277.0,298.8 266.5,304.9 256.0,307.5 254.3,310.0 245.5,317.0 236.8,323.0 237.6,331.0 232.4,337.0 233.3,353.8 235.9,371.3 238.5,388.8 239.4,400.0 242.9,417.5 246.4,435.0 247.3,443.8 240.3,450.8 230.6,455.1 232.4,466.5 235.0,476.0 133.3,476.0 135.0,470.0 132.4,461.3 133.3,452.5 142.0,435.0 146.4,417.5 149.9,400.0 152.5,382.5 156.0,361.5 157.8,344.0 156.0,337.0 156.0,334.4 150.0,336.0 139.5,334.4 129.0,330.0 120.3,323.0 118.5,319.5 106.3,309.0 94.0,296.8 85.3,282.8 80.0,270.5 71.3,260.0 66.0,247.8 66.9,239.9 80.0,232.0 101.0,225.9 123.8,220.6 143.0,212.8 153.5,200.5 159.3,195.0 166.3,181.0 175.0,172.3 191.6,167.4 195.5,165.5 193.5,160.0 189.5,156.5 186.6,150.0 186.0,143.0 186.5,134.0 188.8,126.2 192.0,121.5 195.5,118.3" fill="#f8f8f8" stroke="#f8f8f8" stroke-width="5"/><path d="M196 172 L208 205 L212 240 L209 280" stroke="#222" stroke-width="14" fill="none"/></svg></div>
<div class="th" style="top:319.5px"><svg style="position:absolute;left:0;top:0" width="17" height="23" viewBox="45.7 33 295.3 443" preserveAspectRatio="none"><polygon points="200.0,116.8 208.3,115.2 216.0,116.3 221.5,119.5 225.8,125.5 228.0,133.3 227.8,143.0 225.5,151.0 223.1,156.3 220.0,161.4 218.0,167.0 217.4,175.1 224.0,179.3 231.0,186.3 236.3,195.0 238.0,209.0 238.9,221.3 242.0,231.4 252.5,234.0 270.0,234.0 287.5,236.6 299.8,240.1 304.1,246.3 301.5,255.0 294.5,267.3 287.5,277.8 284.0,288.3 277.0,298.8 266.5,304.9 256.0,307.5 254.3,310.0 245.5,317.0 236.8,323.0 237.6,331.0 232.4,337.0 233.3,353.8 235.9,371.3 238.5,388.8 239.4,400.0 242.9,417.5 246.4,435.0 247.3,443.8 240.3,450.8 230.6,455.1 232.4,466.5 235.0,476.0 133.3,476.0 135.0,470.0 132.4,461.3 133.3,452.5 142.0,435.0 146.4,417.5 149.9,400.0 152.5,382.5 156.0,361.5 157.8,344.0 156.0,337.0 156.0,334.4 150.0,336.0 139.5,334.4 129.0,330.0 120.3,323.0 118.5,319.5 106.3,309.0 94.0,296.8 85.3,282.8 80.0,270.5 71.3,260.0 66.0,247.8 66.9,239.9 80.0,232.0 101.0,225.9 123.8,220.6 143.0,212.8 153.5,200.5 159.3,195.0 166.3,181.0 175.0,172.3 191.6,167.4 195.5,165.5 193.5,160.0 189.5,156.5 186.6,150.0 186.0,143.0 186.5,134.0 188.8,126.2 192.0,121.5 195.5,118.3" fill="#f3b4ba" stroke="#f3b4ba" stroke-width="5"/><path d="M196 172 L208 205 L212 240 L209 280" stroke="#222" stroke-width="14" fill="none"/><path d="M190 125 Q208 108 226 128 L222 150 L192 145Z" fill="#333"/></svg></div>
<div class="th" style="top:348px;background:#fff"></div>
<!-- dialog -->
<div class="a" id="dlg"></div>
<div class="a" id="dlgc"></div>
<div class="a" id="cls"></div>

<svg class="a" style="left:378px;top:43px" width="152" height="152" viewBox="378 43 152 152">
<defs>
<pattern id="ck" width="11.800" height="11.800" patternUnits="userSpaceOnUse" x="374.200" y="41.200"><rect width="11.800" height="11.800" fill="#fff"/><rect x="0" y="0" width="5.900" height="5.900" fill="#cfcfcf"/><rect x="5.900" y="5.900" width="5.900" height="5.900" fill="#cfcfcf"/></pattern>
<linearGradient id="hg" x1="0" x2="1" y1="0" y2="0"><stop offset="0" stop-color="#d0d0d0"/><stop offset=".3" stop-color="#f4f4f4"/><stop offset=".7" stop-color="#fdfdfd"/><stop offset="1" stop-color="#c4c4c4"/></linearGradient>
<filter id="b1"><feGaussianBlur stdDeviation="1.2"/></filter>
<filter id="b2"><feGaussianBlur stdDeviation="0.500"/></filter>
<filter id="pn" x="0" y="0" width="1" height="1"><feTurbulence type="fractalNoise" baseFrequency="0.22" numOctaves="2" seed="5" result="n"/><feColorMatrix in="n" type="matrix" values="0 0 0 0 1  0 0 0 0 1  0 0 0 0 1  0 0 0 1.600 -0.72" result="m"/><feComposite in="m" in2="SourceGraphic" operator="in"/></filter>
</defs>
<rect x="378" y="43" width="152" height="152" fill="#1c1c1c"/>
<g filter="url(#b1)">
<path d="M378 60 L392 43 L420 43 L432 70 L415 100 L405 150 L400 195 L378 195Z" fill="#2a2a2a"/>
<path d="M386 60 L398 44 L416 46 L428 68 L410 90 L396 86Z" fill="#3a3a3a"/>
<path d="M378 56 L392 43 L402 50 L390 72 L378 80Z" fill="#4c4c4c"/>
<path d="M432 70 L446 95 L436 125 L418 160 L410 195 L400 195 L405 150 L415 100Z" fill="#151515"/>
<path d="M446 43 L468 43 L474 90 L470 130 L478 165 L520 150 L512 100 L516 43 L530 43 L530 195 L420 195 L430 150 L448 110 L440 70Z" fill="#212121"/>
<path d="M506 43 L522 43 L524 90 L530 100 L530 195 L508 195 L512 130 L506 90Z" fill="#2d2d2d"/>
<path d="M508 100 Q522 108 530 124 L530 195 L510 195Z" fill="#3b3b3b"/>
<path d="M440 88 L470 96 L472 150 L445 140 L436 120Z" fill="#2b2b2b"/>
<path d="M434 132 Q470 160 514 136 L516 150 Q472 176 432 146Z" fill="#2e2e2e"/>
<path d="M452 165 L500 165 L504 195 L450 195Z" fill="#252525"/>
</g>
<rect x="378" y="43" width="152" height="152" fill="#8a8a8a" filter="url(#pn)" opacity=".22"/>
<g fill="none" stroke="#6e6e6e" stroke-width="1" filter="url(#b2)">
<path d="M427.800 125.200 Q468.500 140 504.500 129" stroke="#6a6a6a"/>
<path d="M439.400 135 Q474.400 158 505.400 135" stroke="#777"/>
<path d="M453 156.300 Q478.300 168 499.600 154.400" stroke="#8a8a8a"/>
<path d="M449.500 164 L447.500 195 M456 166 L454.500 195 M497.700 162 L500.500 195 M501.600 160 L504 195" stroke="#6c6c6c"/>
<path d="M392 43 Q404 56 420 62 L432 70" stroke="#606060"/>
<path d="M440 90 L470 97 M438 104 L471 111 M436 118 L472 124" stroke="#3a3a3a"/>
<path d="M432 70 Q445 95 436 124 Q424 150 420 195" stroke="#383838"/>
<path d="M420 132 Q408 160 404 195" stroke="#444"/>
<path d="M505 128 Q520 118 530 116" stroke="#444"/>
</g>
<g filter="url(#b2)">
<path d="M467.500 43 L480 43 C485 60 484 80 481 95 C479 110 480 120 480 128 L477 150 L474.500 140 C470 125 467.500 110 469 95 C472 80 471 60 467.500 43Z" fill="#8e8e8e"/>
<path d="M469 50 L481 48 M470.500 57 L482.500 55 M471.500 64 L483 62 M472 71 L483 69.500 M472 78 L483 77 M471 85 L482 84.500 M470 92 L481 92 M469 99 L480 99.500 M468.500 106 L480 107 M469 113 L480 114.500 M470 120 L480 122" stroke="#3c3c3c" stroke-width="1.100" fill="none"/>
<path d="M474 44 C478 62 477 82 475 96 C473 110 474 124 476 138" stroke="#4a4a4a" stroke-width=".9" fill="none"/>
<path d="M478.500 43 L490.500 43 C494 58 495.500 75 494.300 92 C493.500 108 490 122 486 134 L480.800 157 L477.500 158.500 L478.200 140 C477 125 477 110 479.500 95 C482.500 80 482.500 60 478.500 43Z" fill="url(#hg)"/>
<path d="M486 46 C489 62 489 80 487 96 C485 110 483 122 481 134" stroke="#cfcfcf" stroke-width="1.400" fill="none"/>
<path d="M471 118 L476.500 154 M473.500 112 L478 150" stroke="#f0f0f0" stroke-width="1.100" fill="none"/>
<path d="M480.800 158.800 L476.500 159.500 L476.200 151 L479.800 151Z" fill="#f2f2f2"/>
</g>
<path d="M378 43 L393 43 L378 59Z" fill="url(#ck)"/>
<path d="M378 59 L393 43" stroke="#777" stroke-width="1.500" filter="url(#b2)"/>
<path d="M518.500 43 L530 43 L530 87.500 C524 85 520.500 77 519.800 64 C519.500 55 519 49 518.500 43Z" fill="url(#ck)"/>
<path d="M530 87.500 C524 85 520.500 77 519.800 64" stroke="#fff" stroke-width="1.200" fill="none" filter="url(#b2)"/>
</svg>
<div class="a" style="left:542px;top:43px;width:40px;height:20.500px;border:1.300px solid #ececec;border-radius:10.500px"></div>
<div class="a" style="left:542px;top:68.500px;width:40px;height:20.500px;border:1px solid #8b8b8b;border-radius:10.500px"></div>
<div class="a" style="left:542px;top:100.500px;width:10px;height:10px;background:#fafafa;border-radius:1.500px"></div>
<div class="a" style="left:426px;top:226px;width:42px;height:14px;background:#424242;border:1px solid #2c6fc6"></div>
<div class="a" style="left:430.500px;top:228.500px;font-size:9px;line-height:10px;color:#fff">1</div>
<div class="a" style="left:383px;top:248.500px;width:142px;height:2.200px;background:#8a8a8a"></div>
<div class="a" style="left:426px;top:271.500px;width:45px;height:14px;background:#454545;border:1px solid #5d5d5d;border-radius:2px"></div>
<div class="a" style="left:443px;top:202.500px;font-size:9px;line-height:10px;color:#f0f0f0;letter-spacing:.1px">100%</div>
<svg class="a" style="left:0;top:0" width="800" height="515" viewBox="0 0 800 515"><defs><filter id="glow" x="-20%" y="-50%" width="140%" height="200%"><feGaussianBlur stdDeviation="0"/></filter></defs><text class="tx" x="652.3" y="18.700" font-size="8.500" fill="#7b7b7b">点</text><text class="tx" x="735.3" y="18.700" font-size="8.500" fill="#7b7b7b">点</text><text class="tx" x="648.5" y="95.900" font-size="8.500" fill="#7b7b7b">点</text><text class="tx" x="709.9" y="95.600" font-size="9.500" fill="#8f8f8f">颜色:</text><text class="tx" x="633.4" y="164.700" font-size="9" fill="#a2a2a2">美国英语</text><text class="tx" x="736.9" y="164.700" font-size="9" fill="#8c8c8c">浑厚</text><path d="M693.3 15.2 L695.8 17.8 L698.3 15.2" fill="none" stroke="#cfcfcf" stroke-width="1.1" stroke-linecap="round" stroke-linejoin="round"/><path d="M693.3 32.9 L695.8 35.5 L698.3 32.9" fill="none" stroke="#cfcfcf" stroke-width="1.1" stroke-linecap="round" stroke-linejoin="round"/><path d="M690.0 54.0 L692.5 56.6 L695.0 54.0" fill="none" stroke="#cfcfcf" stroke-width="1.1" stroke-linecap="round" stroke-linejoin="round"/><path d="M772.5 15.2 L775.0 17.8 L777.5 15.2" fill="none" stroke="#cfcfcf" stroke-width="1.1" stroke-linecap="round" stroke-linejoin="round"/><path d="M772.5 32.9 L775.0 35.5 L777.5 32.9" fill="none" stroke="#cfcfcf" stroke-width="1.1" stroke-linecap="round" stroke-linejoin="round"/><path d="M702.5 160.5 L705.0 163.1 L707.5 160.5" fill="none" stroke="#6f6f6f" stroke-width="1.1" stroke-linecap="round" stroke-linejoin="round"/><path d="M771.5 160.5 L774.0 163.1 L776.5 160.5" fill="none" stroke="#6f6f6f" stroke-width="1.1" stroke-linecap="round" stroke-linejoin="round"/><text class="tx" x="629.2" y="188" font-size="9" font-weight="bold" fill="#ffffff">图层</text><text class="tx" x="659.8" y="187.800" font-size="9" fill="#d0d0d0">通道</text><text class="tx" x="690.5" y="187.800" font-size="9" fill="#d0d0d0">路径</text><text class="tx" x="641.6" y="211.200" font-size="9" fill="#9c9c9c">类型</text><path d="M681.8 207.7 L684.0 209.9 L686.2 207.7" fill="none" stroke="#6f6f6f" stroke-width="1.1" stroke-linecap="round" stroke-linejoin="round"/><text class="tx" x="632" y="231.400" font-size="9" fill="#a0a0a0">颜色减淡</text><path d="M704.0 227.5 L706.5 230.1 L709.0 227.5" fill="none" stroke="#6f6f6f" stroke-width="1.1" stroke-linecap="round" stroke-linejoin="round"/><text class="tx" x="717.1" y="231" font-size="9" fill="#a6a6a6">不透明度:</text><text class="tx" x="627" y="251.200" font-size="9" fill="#a6a6a6">锁定:</text><text class="tx" x="736" y="251.200" font-size="9" fill="#a6a6a6">填充:</text><path d="M791.5 227.2 L794.0 229.8 L796.5 227.2" fill="none" stroke="#747474" stroke-width="1.1" stroke-linecap="round" stroke-linejoin="round"/><path d="M791.5 248.2 L794.0 250.8 L796.5 248.2" fill="none" stroke="#747474" stroke-width="1.1" stroke-linecap="round" stroke-linejoin="round"/><text class="tx" x="671" y="277.160" font-size="9" fill="#fff">图层 1 拷贝 2</text><text class="tx" x="671" y="305.660" font-size="9" fill="#f4f4f4">图层 1 拷贝</text><text class="tx" x="671" y="334.060" font-size="9" fill="#f4f4f4">图层 1</text><text class="tx" x="670.8" y="362.700" font-size="9" fill="#f4f4f4">背景</text><path d="M628.3000000000001 274.4 Q633.6 268.2 638.9 274.4 Q633.6 280.59999999999997 628.3000000000001 274.4Z" fill="#f4f4f4"/><circle cx="633.6" cy="274.2" r="2.1" fill="#2b2b2b"/><circle cx="634.3000000000001" cy="273.59999999999997" r="0.7" fill="#9a9a9a"/><path d="M628.3000000000001 302.8 Q633.6 296.6 638.9 302.8 Q633.6 309.0 628.3000000000001 302.8Z" fill="#f4f4f4"/><circle cx="633.6" cy="302.6" r="2.1" fill="#2b2b2b"/><circle cx="634.3000000000001" cy="302.0" r="0.7" fill="#9a9a9a"/><path d="M628.3000000000001 331.3 Q633.6 325.1 638.9 331.3 Q633.6 337.5 628.3000000000001 331.3Z" fill="#f4f4f4"/><circle cx="633.6" cy="331.1" r="2.1" fill="#2b2b2b"/><circle cx="634.3000000000001" cy="330.5" r="0.7" fill="#9a9a9a"/><rect x="629" y="354.8" width="9" height="9.6" fill="none" stroke="#5f5f5f" stroke-width="1"/><rect x="772.3" y="359.3" width="6.6" height="5.2" rx="0.6" fill="none" stroke="#e6e6e6" stroke-width="1.2"/><path d="M773.7 359.3 v-1.6 a1.9 1.9 0 0 1 3.8 0 v1.6" fill="none" stroke="#e6e6e6" stroke-width="1.1"/><rect x="775.1" y="361" width="1" height="1.8" fill="#e6e6e6"/><path d="M790 182.8h8.2M790 185.3h8.2M790 187.8h8.2" stroke="#d8d8d8" stroke-width="1.2"/><circle cx="634.6" cy="207" r="2.5" fill="none" stroke="#bdbdbd" stroke-width="1.2"/><path d="M632.8 209 L630.6 211.6" stroke="#bdbdbd" stroke-width="1.6" stroke-linecap="round"/><rect x="700.3" y="204.6" width="8.6" height="7" fill="none" stroke="#d2d2d2" stroke-width="1.1"/><path d="M702 210 l1.6-2.2 1.3 1.4 1.2-1.7 1.3 2.5z" fill="#d2d2d2"/><circle cx="723" cy="208.6" r="3.9" fill="none" stroke="#cfcfcf" stroke-width="1.1"/><path d="M720.3 211.3 A3.9 3.9 0 0 0 725.8 205.9 Z" fill="#cfcfcf"/><path d="M737.2 204.6h8v2.2h-.8l-.4-1.1h-1.7v6.2l1.1.3v.7h-4.4v-.7l1.1-.3v-6.2h-1.7l-.4 1.100h-.8z" fill="#dcdcdc"/><rect x="755.3" y="205.3" width="6.4" height="6.4" fill="none" stroke="#d2d2d2" stroke-width="1.1"/><rect x="754.3" y="204.3" width="2" height="2" fill="#d2d2d2"/><rect x="754.3" y="210.7" width="2" height="2" fill="#d2d2d2"/><rect x="760.7" y="204.3" width="2" height="2" fill="#d2d2d2"/><rect x="760.7" y="210.7" width="2" height="2" fill="#d2d2d2"/><path d="M774 204.4h3.6l2.400 2.400v6h-6z" fill="none" stroke="#d2d2d2" stroke-width="1.1"/><rect x="773.3" y="209" width="3.4" height="3.6" fill="#d2d2d2"/><rect x="793.6" y="203.5" width="5.4" height="10.5" rx="2.7" fill="#4a4a4a" stroke="#5e5e5e" stroke-width=".8"/><circle cx="796.3" cy="205.6" r="2.5" fill="#9b9b9b"/><rect x="655.0" y="244.3" width="2.1" height="2.1" fill="#d4d4d4"/><rect x="655.0" y="246.4" width="2.1" height="2.1" fill="#3a3a3a"/><rect x="655.0" y="248.5" width="2.1" height="2.1" fill="#d4d4d4"/><rect x="655.0" y="250.6" width="2.1" height="2.1" fill="#3a3a3a"/><rect x="657.1" y="244.3" width="2.1" height="2.1" fill="#3a3a3a"/><rect x="657.1" y="246.4" width="2.1" height="2.1" fill="#d4d4d4"/><rect x="657.1" y="248.5" width="2.1" height="2.1" fill="#3a3a3a"/><rect x="657.1" y="250.6" width="2.1" height="2.1" fill="#d4d4d4"/><rect x="659.2" y="244.3" width="2.1" height="2.1" fill="#d4d4d4"/><rect x="659.2" y="246.4" width="2.1" height="2.1" fill="#3a3a3a"/><rect x="659.2" y="248.5" width="2.1" height="2.1" fill="#d4d4d4"/><rect x="659.2" y="250.6" width="2.1" height="2.1" fill="#3a3a3a"/><rect x="661.3" y="244.3" width="2.1" height="2.1" fill="#3a3a3a"/><rect x="661.3" y="246.4" width="2.1" height="2.1" fill="#d4d4d4"/><rect x="661.3" y="248.5" width="2.1" height="2.1" fill="#3a3a3a"/><rect x="661.3" y="250.6" width="2.1" height="2.1" fill="#d4d4d4"/><rect x="654.6" y="243.900" width="9.2" height="9.2" fill="none" stroke="#d4d4d4" stroke-width=".9"/><path d="M679.6 243.6 L675 249 L676.4 250.2 L680.6 244.6Z" fill="#cdcdcd"/><path d="M674.6 249.600 q-2.200 .2 -3 3.600 q3.400 .2 4.600-2.300z" fill="#cdcdcd"/><path d="M691.500 243.300l2 2.300h-1.400v2.300h2.300v-1.400l2.300 2-2.300 2v-1.400h-2.300v2.300h1.400l-2 2.300-2-2.300h1.400v-2.300h-2.300v1.400l-2.300-2 2.300-2v1.400h2.300v-2.300h-1.400z" fill="#d0d0d0"/><path d="M703.500 246.200h7.200v6.600M705.600 244v8.800h7" fill="none" stroke="#d0d0d0" stroke-width="1.1"/><path d="M707 245.200 L712 250.600" stroke="#d0d0d0" stroke-width=".9"/><rect x="720.2" y="248" width="7.6" height="5.400" rx=".6" fill="#d6d6d6"/><path d="M721.900 248v-1.500a2.100 2.100 0 0 1 4.200 0v1.500" fill="none" stroke="#d6d6d6" stroke-width="1.2"/><rect x="723.5" y="249.700" width="1" height="2" fill="#555"/><text class="tx" x="370.1" y="26.900" font-size="9.300" font-weight="bold" fill="#000" stroke="#f4f4f4" stroke-width="2.400" stroke-opacity=".5" paint-order="stroke" filter="url(#glow)">最小值</text><text class="tx" x="552.5" y="55.200" font-size="9.400" fill="#fff">确定</text><text class="tx" x="552.5" y="81.100" font-size="9.400" fill="#f0f0f0">复位</text><text class="tx" x="558" y="108.340" font-size="9.300" fill="#f0f0f0">预览(P)</text><path d="M580.600 111.600h4.400" stroke="#f0f0f0" stroke-width=".8"/><text class="tx" x="388.2" y="235.640" font-size="9.300" fill="#f0f0f0">半径(R):</text><path d="M409.800 238.700h4.800" stroke="#f0f0f0" stroke-width=".8"/><text class="tx" x="476" y="235.600" font-size="9.400" fill="#f0f0f0">像素</text><text class="tx" x="387.9" y="280.740" font-size="9.300" fill="#f0f0f0">保留(V):</text><path d="M409.800 283.800h4.800" stroke="#f0f0f0" stroke-width=".8"/><text class="tx" x="433.1" y="280.800" font-size="9.400" fill="#f6f6f6">方形</text><path d="M463.2 277.8 L465.5 280.2 L467.8 277.8" fill="none" stroke="#d8d8d8" stroke-width="1.1" stroke-linecap="round" stroke-linejoin="round"/><circle cx="413.3" cy="206.3" r="3.700" fill="none" stroke="#f0f0f0" stroke-width="1.300"/><path d="M416.1 209.20000000000002 L419.5 212.8" stroke="#f0f0f0" stroke-width="1.800" stroke-linecap="round"/><path d="M411.3 206.3h4" stroke="#f0f0f0" stroke-width="1.100"/><circle cx="493.2" cy="206.3" r="3.700" fill="none" stroke="#f0f0f0" stroke-width="1.300"/><path d="M496.0 209.20000000000002 L499.4 212.8" stroke="#f0f0f0" stroke-width="1.800" stroke-linecap="round"/><path d="M491.2 206.3h4" stroke="#f0f0f0" stroke-width="1.100"/><path d="M493.2 204.3v4" stroke="#f0f0f0" stroke-width="1.100"/><path d="M382.500 251.600 L387 256.200 V260.200 H378 V256.200Z" fill="#fafafa" stroke="#2a2a2a" stroke-width=".7"/><path d="M585.200 18.400l5.600 5.200M590.800 18.400l-5.600 5.200" stroke="#4a1a14" stroke-width="3.400" stroke-linecap="round" opacity=".55"/><path d="M585.200 18.400l5.600 5.200M590.800 18.400l-5.600 5.200" stroke="#fff" stroke-width="2.100" stroke-linecap="butt"/><path d="M544.200 105.600l2.300 2.500 3.900-5" fill="none" stroke="#222" stroke-width="1.600"/><g fill="none" stroke="#ececec" stroke-width="1.100"><path d="M600.800 -1 L601.800 7.400 L605.600 6.800 L604.600 -1"/><path d="M608.800 4.600 L613 3.800 L614.600 12 L610 12.800Z"/><path d="M605 -1 L609.400 12.400"/><path d="M602.600 1 l1.600 3.600 M610.800 6.200 l1.600 4"/></g></svg>

</body></html>
